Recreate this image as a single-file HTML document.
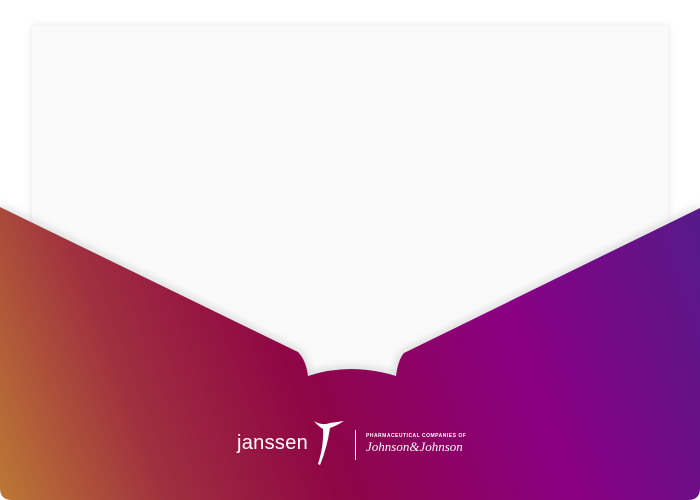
<!DOCTYPE html>
<html><head><style>
html,body{margin:0;padding:0;background:#fff;width:700px;height:500px;overflow:hidden}
.card{position:absolute;left:32px;top:26px;width:636px;height:380px;background:#fafafa;box-shadow:0 0 8px rgba(0,0,0,0.1)}
svg{position:absolute;left:0;top:0}
.logo{position:absolute;left:237px;top:420px;color:#fff;font-family:"Liberation Sans",sans-serif}
</style></head><body>
<div class="card"></div>
<svg width="700" height="500" viewBox="0 0 700 500">
<defs>
<linearGradient id="g" x1="0" y1="480" x2="700" y2="220" gradientUnits="userSpaceOnUse">
<stop offset="0" stop-color="#bb7535"/>
<stop offset="0.2" stop-color="#a0303f"/>
<stop offset="0.42" stop-color="#8f0545"/>
<stop offset="0.72" stop-color="#8a0085"/>
<stop offset="1" stop-color="#561a88"/>
</linearGradient>
<filter id="b"><feGaussianBlur stdDeviation="4"/></filter>
</defs>
<path d="M0 207 L298 352 Q306 360 308 376 Q350 362 396 376 Q398 360 404 353 L700 208" fill="none" stroke="rgba(0,0,0,0.2)" stroke-width="4" filter="url(#b)"/>
<path d="M0 207 L298 352 Q306 360 308 376 Q350 362 396 376 Q398 360 404 353 L700 208 L700 488 Q700 500 688 500 L12 500 Q0 500 0 488 Z" fill="url(#g)"/>
<g fill="#fff">
<path d="M314 421 Q322 426 330 423 L344 421 Q336 426 330 428 Q327 448 320 465 L318 464 Q324 445 323 429 Q318 426 314 421 Z"/>
<rect x="355" y="430" width="1" height="30"/>
</g>
</svg>
<div class="logo">
<span style="position:absolute;left:0;top:12px;font-size:20px;letter-spacing:0.3px;white-space:nowrap">janssen</span>
<span style="position:absolute;left:129px;top:13px;font-size:5px;font-weight:bold;letter-spacing:0.5px;white-space:nowrap">PHARMACEUTICAL COMPANIES OF</span>
<span style="position:absolute;left:129px;top:19px;font-size:13px;font-family:'Liberation Serif',serif;font-style:italic;white-space:nowrap">Johnson&amp;Johnson</span>
</div>
</body></html>
